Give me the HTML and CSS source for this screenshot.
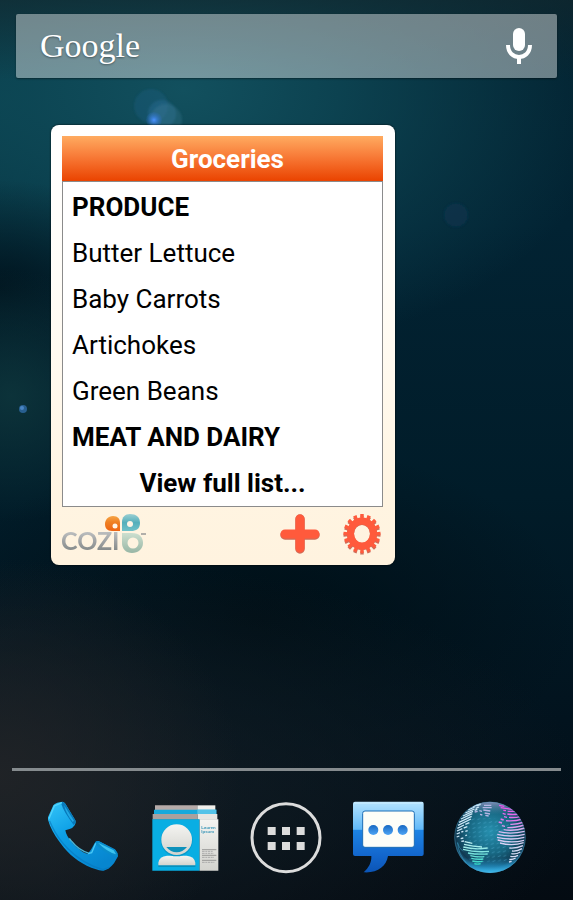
FILE: index.html
```html
<!DOCTYPE html>
<html lang="en">
<head>
<meta charset="utf-8">
<meta name="viewport" content="width=device-width, initial-scale=1">
<title>Home screen</title>
<link rel="stylesheet" href="styles.css">
</head>
<body>
<div class="home">
  <svg class="flares" width="573" height="440" viewBox="0 0 573 440" aria-hidden="true">
    <defs>
      <radialGradient id="glow"><stop offset="0" stop-color="#4d94ff"/><stop offset=".4" stop-color="#3a80e0" stop-opacity=".7"/><stop offset="1" stop-color="#2c6fc4" stop-opacity=".15"/></radialGradient>
      <filter id="soft" x="-20%" y="-20%" width="140%" height="140%"><feGaussianBlur stdDeviation="1"/></filter>
    </defs>
    <g filter="url(#soft)">
      <circle cx="151" cy="106" r="17" fill="#2c6fa4" opacity=".2"/>
      <circle cx="162" cy="114" r="14" fill="#3c83b4" opacity=".24"/>
      <circle cx="166" cy="120" r="16" fill="#4c88a4" opacity=".24"/>
      <circle cx="456" cy="215" r="12" fill="#12395a" opacity=".4"/>
    </g>
    <circle cx="154" cy="120" r="8" fill="url(#glow)"/>
    <circle cx="23" cy="409" r="4" fill="#2f6ba6" opacity=".8"/>
    <circle cx="22" cy="408" r="2" fill="#4a86c4"/>
  </svg>

  <header class="search">
    <a class="brand" href="#">Google</a>
    <button class="plain" type="button" aria-label="Voice search">
      <svg width="28" height="38" viewBox="0 0 28 38">
        <rect x="8" y="1" width="12" height="23" rx="6" fill="#fff"/>
        <path d="M3 18C3 34 25 34 25 18" fill="none" stroke="#fff" stroke-width="4"/>
        <path d="M14 28v9" stroke="#fff" stroke-width="4"/>
      </svg>
    </button>
  </header>

  <main class="desktop">
    <section class="widget">
      <h1 class="title">Groceries</h1>
      <div class="list">
        <h2 class="row strong">PRODUCE</h2>
        <p class="row">Butter Lettuce</p>
        <p class="row">Baby Carrots</p>
        <p class="row">Artichokes</p>
        <p class="row">Green Beans</p>
        <h2 class="row strong">MEAT AND DAIRY</h2>
        <a class="row strong more" href="#">View full list...</a>
      </div>
      <footer class="tools">
        <svg class="cozi" width="86" height="42" viewBox="0 0 86 42" role="img" aria-label="Cozi">
          <defs>
            <linearGradient id="grey" x1="0" y1="18" x2="0" y2="38" gradientUnits="userSpaceOnUse"><stop offset="0" stop-color="#bfc1c2"/><stop offset=".45" stop-color="#a3a6a7"/><stop offset="1" stop-color="#848988"/></linearGradient>
            <linearGradient id="orange" x1="0" y1="0" x2="0" y2="1"><stop offset="0" stop-color="#f6a546"/><stop offset=".4" stop-color="#ef8124"/><stop offset="1" stop-color="#ee6412"/></linearGradient>
            <linearGradient id="teal" x1="0" y1="0" x2="0" y2="1"><stop offset="0" stop-color="#9bcfd2"/><stop offset=".5" stop-color="#55afbb"/><stop offset="1" stop-color="#6fc1c9"/></linearGradient>
            <linearGradient id="sage" x1="0" y1="0" x2="0" y2="1"><stop offset="0" stop-color="#cddfcf"/><stop offset="1" stop-color="#98b6a5"/></linearGradient>
          </defs>
          <text class="cozi-name" x="-1" y="37" fill="url(#grey)">COZI</text>
          <path d="M58 18H50C45 18 43 15 43 11S46 3 51 3S58 6 58 10Z" fill="url(#orange)"/>
          <circle cx="53" cy="13" r="2.500" fill="#fff5e6"/>
          <path d="M60 18V9C60 4 63 1 68 1C74 1 78 4 78 10S74 18 69 18Z" fill="url(#teal)"/>
          <circle cx="68" cy="11" r="3" fill="#fff5e6"/>
          <path d="M60 20H70C77 20 81 24 81 30S76 40 70 40S60 36 60 30Z" fill="url(#sage)"/>
          <circle cx="71" cy="30" r="5.500" fill="#fff3e0"/>
          <path d="M79 21h5" stroke="#999" stroke-width="1.500"/>
        </svg>
        <div class="actions">
          <button class="plain" type="button" aria-label="Add item">
            <svg width="42" height="42" viewBox="0 0 42 42">
              <path d="M21 6v30M6 22h30" stroke="#b9331f" stroke-width="9.500" stroke-linecap="round" opacity=".7"/>
              <path d="M21 6v29M6 21h30" stroke="#ff5a3c" stroke-width="9" stroke-linecap="round"/>
            </svg>
          </button>
          <button class="plain" type="button" aria-label="Settings">
            <svg width="42" height="42" viewBox="0 0 42 42" fill="none">
              <g stroke="#b9331f" opacity=".7"><ellipse cx="21" cy="21" rx="11.500" ry="12.500" stroke-width="7"/><ellipse cx="21" cy="22" rx="16" ry="17" stroke-width="5" pathLength="160" stroke-dasharray="5 5" stroke-dashoffset="2.500"/></g>
              <g stroke="#ff5a3c"><ellipse cx="21" cy="20.500" rx="11.500" ry="12.500" stroke-width="7"/><ellipse cx="21" cy="20.500" rx="16" ry="17" stroke-width="5" pathLength="160" stroke-dasharray="5 5" stroke-dashoffset="2.500"/></g>
            </svg>
          </button>
        </div>
      </footer>
    </section>
  </main>

  <nav class="dock" aria-label="Favourites">
    <a href="#" aria-label="Phone">
      <svg width="80" height="80" viewBox="39 21 240 240">
        <defs><linearGradient id="handset" x1="0" y1="0" x2=".6" y2="1"><stop offset="0" stop-color="#35c5f8"/><stop offset=".45" stop-color="#0d9fe6"/><stop offset="1" stop-color="#0786cf"/></linearGradient></defs>
        <path d="M54 82L70 46Q73 42 82 38L97 35Q103 36 106 41L136 91Q139 97 134 106Q129 114 119 117L106 121C108 136 123 156 139 171C154 184 165 191 174 191L184 177L196 156Q199 152 206 153L255 178Q264 188 264 199L252 220Q245 229 235 236L221 242Q209 243 198 238C160 226 126 202 102 173C79 145 62 118 54 89Z" fill="url(#handset)"/>
        <path d="M97 35Q103 36 106 41L136 91Q138 98 131 105Q117 86 107 70Q97 53 94 42Z" fill="#0879ba"/>
        <path d="M102 45L131 91L129 97Q109 73 102 45Z" fill="#20a8e4"/>
        <path d="M196 156Q202 152 210 155L256 180Q264 188 263 199Q241 197 217 180Q205 171 196 163Z" fill="#0a8ccb"/>
        <path d="M204 158L251 181L258 193Q229 184 204 158Z" fill="#3cc4f0"/>
        <path d="M57 86L73 48L96 38M174 191L185 188L197 160M118 145Q144 181 178 190" fill="none" stroke="#5bd9ff" stroke-width="4" opacity=".8"/>
        <path d="M59 93C80 146 133 216 219 239L238 232" fill="none" stroke="#0776bd" stroke-width="4" opacity=".6"/>
      </svg>
    </a>
    <a href="#" aria-label="Contacts">
      <svg width="80" height="80" viewBox="14 21 240 240">
        <defs><linearGradient id="paper" x1="0" y1="0" x2="0" y2="1"><stop offset="0" stop-color="#f4f4f1"/><stop offset="1" stop-color="#d3d3ce"/></linearGradient></defs>
        <path d="M44 46h127v15H44z" fill="#b6aba9"/><path d="M171 46h54v15h-54z" fill="#f1efeb"/>
        <path d="M41 59h187v14H41z" fill="#17a9dc"/><path d="M171 59h57v14h-57z" fill="#55c3e8"/>
        <path d="M37 72h135v17H37z" fill="#aaa09e"/><path d="M172 72h59v17h-59z" fill="#e8e6e2"/>
        <path d="M36 88h142v154H36z" fill="#09aee3"/><path d="M178 88h56v154h-56z" fill="url(#paper)"/>
        <path d="M54 231V221Q57 202 80 200H139Q162 202 165 221V231Z" fill="#087ba4" opacity=".6"/>
        <path d="M54 226V218Q57 199 80 197H139Q162 199 165 218V226Z" fill="url(#paper)"/>
        <circle cx="109" cy="151" r="48" fill="#079acb"/>
        <circle cx="109" cy="149" r="46" fill="url(#paper)"/>
        <path d="M78 171H140Q127 187 109 187T78 171Z" fill="#0d91bb"/>
        <text class="card-text" x="183" y="117">Lauren</text><text class="card-text" x="183" y="130">Ipsum</text>
        <path d="M185 179h43M185 196h43M185 211h43" stroke="#777" stroke-width="2"/>
        <path d="M185 184h34M185 190h35M185 202h36M185 217h37" stroke="#aaa" stroke-width="3" stroke-dasharray="8 2 5 2"/>
      </svg>
    </a>
    <a href="#" aria-label="All apps">
      <svg width="80" height="80" viewBox="19 21 240 240">
        <circle cx="139" cy="143" r="102" fill="none" stroke="#dcdcdc" stroke-width="9"/>
        <path d="M84 111h24v24H84zM127 111h24v24h-24zM171 111h24v24h-24zM84 156h24v24H84zM127 156h24v24h-24zM171 156h24v24h-24z" fill="#dcdcdc"/>
      </svg>
    </a>
    <a href="#" aria-label="Messages">
      <svg width="80" height="80" viewBox="24 20 240 240">
        <defs>
          <linearGradient id="bubble" x1="0" y1="34" x2="0" y2="247" gradientUnits="userSpaceOnUse"><stop offset="0" stop-color="#b5e4ff"/><stop offset=".39" stop-color="#61b9f8"/><stop offset=".4" stop-color="#1d84e4"/><stop offset=".75" stop-color="#1367cd"/><stop offset="1" stop-color="#0b54b5"/></linearGradient>
          <linearGradient id="dot" x1="0" y1="0" x2="0" y2="1"><stop offset="0" stop-color="#1668c2"/><stop offset="1" stop-color="#4ea5f5"/></linearGradient>
        </defs>
        <path d="M45 34H246Q251 34 251 40V191Q251 197 245 197H144C139 228 112 249 71 246C86 232 95 217 94 197H45Q39 197 39 191V40Q39 34 45 34Z" fill="url(#bubble)"/>
        <path d="M42 38H248" stroke="#d0efff" stroke-width="3"/>
        <rect x="68" y="62" width="155" height="109" rx="7" fill="#fdfef8" stroke="#1c6eb6" stroke-width="3"/>
        <g fill="url(#dot)"><circle cx="100" cy="119" r="15"/><circle cx="144" cy="119" r="15"/><circle cx="188" cy="119" r="15"/></g>
      </svg>
    </a>
    <a href="#" aria-label="Browser">
      <svg width="80" height="80" viewBox="30 21 240 240">
        <defs>
          <radialGradient id="sea" cx=".5" cy=".42" r=".58"><stop offset="0" stop-color="#268fae"/><stop offset=".55" stop-color="#176681"/><stop offset=".85" stop-color="#103951"/><stop offset="1" stop-color="#2d81ad"/></radialGradient>
          <linearGradient id="shore" x1="0" y1="0" x2="0" y2="1"><stop offset=".78" stop-color="#1c83b3" stop-opacity="0"/><stop offset=".9" stop-color="#2599cf" stop-opacity=".7"/><stop offset="1" stop-color="#40bdf0"/></linearGradient>
          <linearGradient id="sky" x1="0" y1="0" x2="0" y2="1"><stop offset="0" stop-color="#a9a5d6" stop-opacity=".75"/><stop offset=".18" stop-color="#578aa9" stop-opacity="0"/></linearGradient>
          <linearGradient id="neon" x1="200" y1="50" x2="210" y2="180" gradientUnits="userSpaceOnUse"><stop offset="0" stop-color="#ec50e9"/><stop offset=".35" stop-color="#df7ceb"/><stop offset=".6" stop-color="#d8c0f2"/><stop offset="1" stop-color="#d5dcf6"/></linearGradient>
          <linearGradient id="mint" x1="0" y1="155" x2="0" y2="225" gradientUnits="userSpaceOnUse"><stop offset="0" stop-color="#c2f1f4"/><stop offset="1" stop-color="#2cd5c3"/></linearGradient>
          <pattern id="dashes" width="17" height="13" patternUnits="userSpaceOnUse" patternTransform="rotate(-5)"><path d="M2 7l9-3" stroke="#58b7dc" stroke-width="2" opacity=".6"/></pattern>
          <clipPath id="ball"><circle cx="150" cy="142" r="107"/></clipPath>
        </defs>
        <circle cx="150" cy="142" r="107" fill="url(#sea)"/>
        <g clip-path="url(#ball)">
          <rect x="86" y="85" width="120" height="132" fill="url(#dashes)"/>
          <rect x="43" y="35" width="214" height="214" fill="url(#shore)"/>
          <rect x="43" y="35" width="214" height="214" fill="url(#sky)"/>
          <g fill="none" stroke="#cbe6f6" stroke-width="4">
            <path d="M99 50L122 40M84 60L104 51M110 48L122 43M76 69L103 57M107 55L117 51M69 78L99 64M104 61L112 58M63 87L97 71M57 97L95 79M54 106L93 87M52 115L72 105M76 103L88 98M51 123L67 116M71 114L82 110M50 132L60 128M64 126L70 124M76 124L83 122M50 141L58 138M62 146L70 144M76 137L81 135M64 154L72 153"/>
          </g>
          <path d="M132 46h22M128 53h27M130 60l21 3M134 69l16 3M136 76l10 2M104 66l9-2M118 62l8 2M120 73l7 2" stroke="#b4b5e4" stroke-width="4"/>
          <g fill="none" stroke="url(#mint)" stroke-width="4">
            <path d="M74 155L97 160M72 163Q100 170 126 171M70 171Q105 180 143 174M69 178Q105 188 147 184M84 189Q111 194 143 192M91 197Q111 202 133 200M94 205Q112 209 130 207M97 213Q111 217 128 214M103 221Q112 224 122 221"/>
          </g>
          <g fill="none" stroke="url(#neon)" stroke-width="4">
            <path d="M177 46L193 49M182 53Q202 56 219 59M190 61L198 62M203 64L229 64M188 70L197 73M202 72Q218 75 237 72M192 80L201 82M207 82Q223 84 244 79M182 87L191 90M198 92Q220 95 249 87M176 96L186 99M211 103Q228 104 253 96M186 107L195 109M202 113Q223 114 253 105M191 119Q222 124 255 114M176 125Q211 134 254 124M172 133Q214 143 254 133M171 142Q214 152 253 142M173 150Q214 161 252 151M180 159Q216 169 251 158M208 174Q228 176 249 167M216 183Q230 185 246 176M214 191Q228 194 241 186M211 199Q223 202 234 196M208 208Q216 210 227 204M207 216L215 214"/>
          </g>
          <path d="M53 157Q55 194 79 218M69 184Q58 176 52 158" fill="none" stroke="#44abd1" stroke-width="2" opacity=".7"/>
        </g>
        <circle cx="150" cy="142" r="106" fill="none" stroke="#529bc0" stroke-width="2" opacity=".5"/>
      </svg>
    </a>
  </nav>
</div>
</body>
</html>
```
FILE: styles.css
```css
* {
  box-sizing: border-box;
}

body {
  margin: 0;
  font-family: Roboto, "Liberation Sans", sans-serif;
  color: #000;
}

h1,
h2,
p {
  margin: 0;
  font-weight: 400;
}

a {
  color: inherit;
  text-decoration: none;
}

svg {
  display: block;
}

.home {
  position: relative;
  display: flex;
  flex-direction: column;
  min-height: 100vh;
  padding-top: 14px;
  overflow: hidden;
  background:
    linear-gradient(to bottom, rgba(18, 40, 46, 0.65) 0, rgba(18, 40, 46, 0) 80px),
    radial-gradient(ellipse 42% 24% at 0% 86%, rgba(34, 36, 39, 0.85), rgba(28, 34, 39, 0) 100%),
    radial-gradient(ellipse 90% 26% at 12% 88%, rgba(20, 30, 37, 0.9), rgba(14, 26, 34, 0) 100%),
    radial-gradient(ellipse 22% 14% at 2% 44%, rgba(14, 54, 60, 0.85), rgba(14, 54, 60, 0) 100%),
    radial-gradient(ellipse 30% 12% at 0% 32%, rgba(0, 19, 29, 0.9), rgba(0, 19, 29, 0) 100%),
    radial-gradient(ellipse 76% 30% at 32% 10%, #12505e 0%, rgba(14, 72, 86, 0.85) 35%, rgba(2, 34, 48, 0) 100%),
    radial-gradient(ellipse 50% 22% at 0% 11%, rgba(8, 72, 84, 0.8), rgba(8, 72, 84, 0) 100%),
    radial-gradient(ellipse 56% 20% at 45% 69%, rgba(0, 14, 21, 0.9), rgba(0, 14, 21, 0) 100%),
    linear-gradient(to bottom, #02202e 0%, #022333 25%, #011c29 55%, #02131e 80%, #040b12 100%);
}

.flares {
  position: absolute;
  top: 0;
  left: 0;
}

.search {
  position: relative;
  display: flex;
  align-items: center;
  justify-content: space-between;
  height: 64px;
  margin: 0 16px;
  padding: 0 24px;
  border-radius: 2px;
  background: rgba(255, 255, 255, 0.41);
  box-shadow: 0 1px 2px rgba(0, 0, 0, 0.4);
}

.brand {
  font-family: "Liberation Serif", serif;
  font-size: 34px;
  line-height: 60px;
  color: #fff;
  text-shadow: 0 1px 2px rgba(0, 0, 0, 0.4);
}

.plain {
  padding: 0;
  border: 0;
  background: none;
  cursor: pointer;
}

.desktop {
  position: relative;
  flex: 1;
  padding: 47px 51px;
}

.widget {
  width: 73%;
  min-width: 344px;
  padding: 11px 12px 10px 11px;
  border-radius: 8px;
  background: linear-gradient(to bottom, #fff 0%, #fffdf8 35%, #fff4e1 85%, #fff3df 100%);
  box-shadow: 0 0 2px #000;
}

.title {
  height: 45px;
  background: linear-gradient(to bottom, #ffab60, #f87b38 45%, #ea4300);
  color: #fff;
  font-size: 26px;
  font-weight: 700;
  line-height: 46px;
  text-align: center;
  text-indent: 10px;
}

.list {
  padding-top: 2px;
  border: 1px solid #8b8b8b;
  background: #fff;
}

.row {
  display: block;
  padding: 0 9px;
  font-size: 26px;
  line-height: 46px;
}

.strong {
  font-weight: 700;
}

.more {
  text-align: center;
}

.tools {
  display: flex;
  align-items: center;
  justify-content: space-between;
  padding-top: 6px;
}

.cozi-name {
  font: 700 25px Lato, sans-serif;
}

.actions {
  display: flex;
  gap: 20px;
}

.dock {
  position: relative;
  display: grid;
  grid-template-columns: repeat(5, 1fr);
  justify-items: center;
  margin: 0 12px;
  padding: 26px 20px 23px;
  border-top: 3px solid #858b8e;
}

.card-text {
  font: 700 13px "Liberation Sans", sans-serif;
  fill: #3c97b8;
}
```
